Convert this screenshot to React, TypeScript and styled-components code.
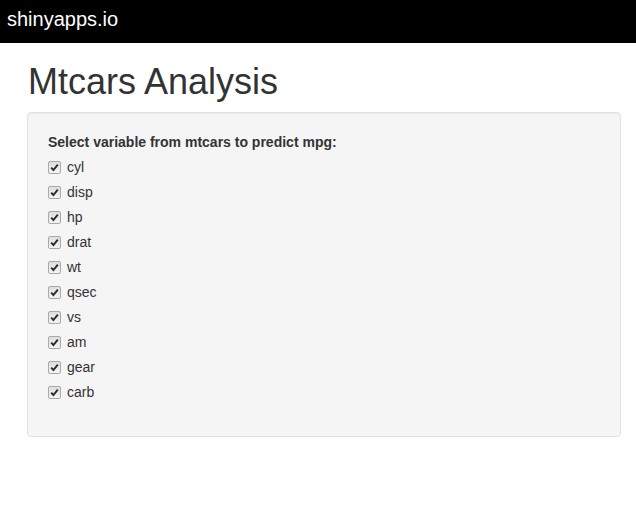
import React from "react";
import styled, { createGlobalStyle } from "styled-components";

const GlobalStyle = createGlobalStyle`
  html, body { margin: 0; padding: 0; background: #fff; }
  body {
    font-family: "Liberation Sans", Arial, Helvetica, sans-serif;
    font-size: 14px;
    line-height: 20px;
    color: #333;
  }
`;

const Page = styled.div`
  width: 636px;
  min-height: 532px;
  background: #fff;
`;

const TopBar = styled.header`
  height: 43px;
  background: #000;
  display: flex;
  align-items: flex-start;
  padding: 0 7px;
  box-sizing: border-box;
`;

const Brand = styled.span`
  color: #fff;
  font-size: 20px;
  line-height: 20px;
  margin-top: 9px;
`;

const Main = styled.main`
  padding: 0 15px 0 27px;
`;

const Title = styled.h1`
  margin: 19px 0 10px 1px;
  font-size: 36px;
  font-weight: 500;
  line-height: 1.1;
  color: #333;
`;

const Well = styled.section`
  background: #f5f5f5;
  border: 1px solid #e3e3e3;
  border-radius: 4px;
  box-shadow: inset 0 1px 1px rgba(0, 0, 0, 0.05);
  padding: 19px 19px 19px 20px;
  min-height: 20px;
`;

const Group = styled.fieldset`
  border: 0;
  margin: 0 0 15px;
  padding: 0;
  display: flex;
  flex-direction: column;
`;

const GroupLabel = styled.legend`
  padding: 0;
  font-weight: bold;
  font-size: 14px;
  line-height: 20px;
  margin-bottom: 5px;
`;

const Options = styled.div`
  display: flex;
  flex-direction: column;
  gap: 5px;
`;

const Option = styled.label`
  display: flex;
  align-items: center;
  gap: 6px;
  height: 20px;
  font-size: 14px;
  color: #333;
  cursor: pointer;
`;

const Box = styled.span`
  width: 11px;
  height: 11px;
  border: 1px solid #a9a9a9;
  border-radius: 2px;
  background: linear-gradient(#dedede, #f4f4f4);
  display: inline-flex;
  align-items: center;
  justify-content: center;
  flex: none;
  margin-top: 1px;
`;

const Hidden = styled.input`
  position: absolute;
  opacity: 0;
  width: 0;
  height: 0;
  margin: 0;
`;

const vars = ["cyl", "disp", "hp", "drat", "wt", "qsec", "vs", "am", "gear", "carb"];

export default function App() {
  return (
    <Page>
      <GlobalStyle />
      <TopBar>
        <Brand>shinyapps.io</Brand>
      </TopBar>
      <Main>
        <Title>Mtcars Analysis</Title>
        <Well>
          <Group>
            <GroupLabel>Select variable from mtcars to predict mpg:</GroupLabel>
            <Options>
              {vars.map((v) => (
                <Option key={v}>
                  <Hidden type="checkbox" defaultChecked />
                  <Box>
                    <svg width="9" height="9" viewBox="0 0 9 9">
                      <path d="M1.2 4.6 L3.4 7 L7.8 1.6" fill="none" stroke="#2b2b2b" strokeWidth="1.9" />
                    </svg>
                  </Box>
                  {v}
                </Option>
              ))}
            </Options>
          </Group>
        </Well>
      </Main>
    </Page>
  );
}
